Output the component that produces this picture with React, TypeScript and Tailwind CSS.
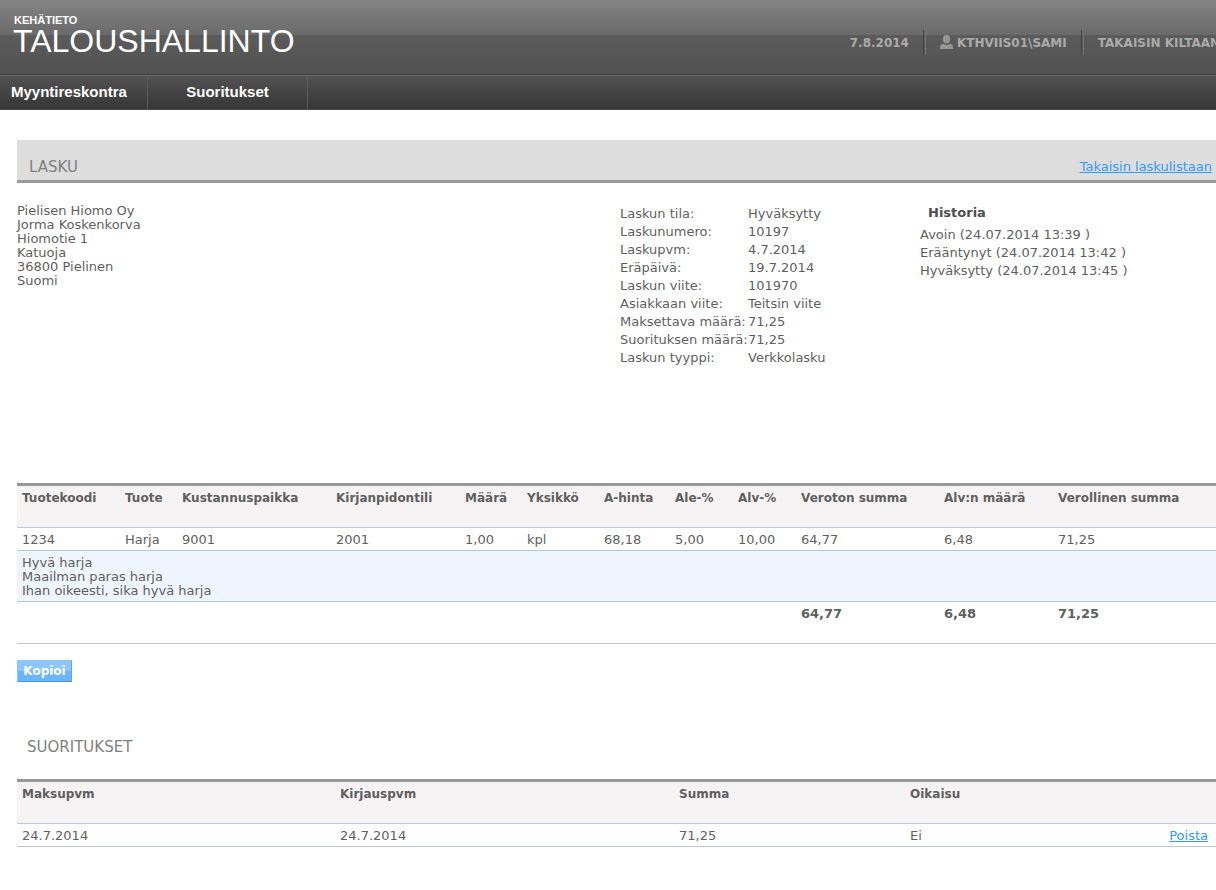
const invoiceInfo = [
  ["Laskun tila:", "Hyväksytty"],
  ["Laskunumero:", "10197"],
  ["Laskupvm:", "4.7.2014"],
  ["Eräpäivä:", "19.7.2014"],
  ["Laskun viite:", "101970"],
  ["Asiakkaan viite:", "Teitsin viite"],
  ["Maksettava määrä:", "71,25"],
  ["Suorituksen määrä:", "71,25"],
  ["Laskun tyyppi:", "Verkkolasku"],
];

const history = [
  "Avoin (24.07.2014 13:39 )",
  "Erääntynyt (24.07.2014 13:42 )",
  "Hyväksytty (24.07.2014 13:45 )",
];

const productColumns = [
  { title: "Tuotekoodi", value: "1234", width: "w-[103px]" },
  { title: "Tuote", value: "Harja", width: "w-[57px]" },
  { title: "Kustannuspaikka", value: "9001", width: "w-[154px]" },
  { title: "Kirjanpidontili", value: "2001", width: "w-[129px]" },
  { title: "Määrä", value: "1,00", width: "w-[62px]" },
  { title: "Yksikkö", value: "kpl", width: "w-[77px]" },
  { title: "A-hinta", value: "68,18", width: "w-[71px]" },
  { title: "Ale-%", value: "5,00", width: "w-[63px]" },
  { title: "Alv-%", value: "10,00", width: "w-[63px]" },
  { title: "Veroton summa", value: "64,77", width: "w-[143px]" },
  { title: "Alv:n määrä", value: "6,48", width: "w-[114px]" },
  { title: "Verollinen summa", value: "71,25", width: "" },
];

const UserIcon = () => (
  <svg viewBox="0 0 13 14" className="w-[13px] h-[14px] mb-0.5" fill="#979797" aria-hidden="true">
    <ellipse cx="6.5" cy="4.2" rx="3.6" ry="4.2" />
    <path d="M0 14v-1.800c0-1.800 1-2.800 3-3.400 1 .8 2.200 1.100 3.500 1.100s2.500-.3 3.500-1.100c2 .6 3 1.600 3 3.400V14z" />
  </svg>
);

const Divider = () => (
  <span className="h-[25px] w-[3px] self-start border-l border-r border-l-[#444444] border-r-[#747474]" />
);

const Header = () => (
  <header className="text-white">
    <div className="flex h-[75px] justify-between border-b border-[#3f3f3f] bg-[linear-gradient(#848484,#6a6a6a_35px,#5b5b5b_35px,#525252)]">
      <div className="pl-[13px] pt-3.5 font-['Liberation_Sans',Arial,sans-serif]">
        <p className="pl-px text-[11px] leading-[12px] font-bold">KEHÄTIETO</p>
        <h1 className="text-[32px] leading-[30px]">TALOUSHALLINTO</h1>
      </div>
      <div className="-mr-1 mt-[30px] flex h-[26px] items-center gap-3.5 whitespace-nowrap text-xs font-bold text-[#ababab]">
        <span>7.8.2014</span>
        <Divider />
        <span className="flex items-center gap-1">
          <UserIcon />
          KTHVIIS01\SAMI
        </span>
        <Divider />
        <a href="#kilta">TAKAISIN KILTAAN</a>
      </div>
    </div>
    <nav className="flex h-[35px] border-t border-b border-t-[#6a6a6a] border-b-[#4a4a4a] bg-[linear-gradient(#525252,#363636)] font-['Liberation_Sans',Arial,sans-serif] text-[15px] font-bold">
      <a href="#myyntireskontra" className="flex w-[148px] items-center border-r border-[#5a5a5a] pl-[11px]">
        Myyntireskontra
      </a>
      <a href="#suoritukset" className="flex w-[160px] items-center justify-center border-r border-[#5a5a5a]">
        Suoritukset
      </a>
    </nav>
  </header>
);

const ProductTable = () => (
  <table className="w-full table-fixed border-t-3 border-[#999999] text-left leading-[14px]">
    <thead className="bg-[#f5f3f4] text-xs leading-[14px]">
      <tr className="h-[43px] border-b border-[#bcc7d5] align-top">
        {productColumns.map((col) => (
          <th key={col.title} className={`pl-[5px] pt-[5px] whitespace-nowrap ${col.width}`}>
            {col.title}
          </th>
        ))}
      </tr>
    </thead>
    <tbody>
      <tr className="h-[23px] border-b border-[#bcc7d5]">
        {productColumns.map((col) => (
          <td key={col.title} className="pl-[5px] pt-0.5">{col.value}</td>
        ))}
      </tr>
      <tr className="border-b border-[#bcc7d5] bg-[#eef5ff]">
        <td colSpan={12} className="pt-[5px] pb-[3px] pl-[5px]">
          <p>Hyvä harja</p>
          <p>Maailman paras harja</p>
          <p>Ihan oikeesti, sika hyvä harja</p>
        </td>
      </tr>
      <tr className="h-[42px] border-b border-[#bcc7d5] align-top font-bold">
        <td colSpan={9}></td>
        <td className="pl-[5px] pt-[5px]">64,77</td>
        <td className="pl-[5px] pt-[5px]">6,48</td>
        <td className="pl-[5px] pt-[5px]">71,25</td>
      </tr>
    </tbody>
  </table>
);

const PaymentTable = () => (
  <table className="w-full table-fixed border-t-3 border-[#999999] text-left leading-[14px]">
    <thead className="bg-[#f5f3f4] text-xs leading-[14px]">
      <tr className="h-[43px] border-b border-[#bcc7d5] align-top">
        <th className="w-[318px] pl-[5px] pt-[5px]">Maksupvm</th>
        <th className="w-[339px] pl-[5px] pt-[5px]">Kirjauspvm</th>
        <th className="w-[231px] pl-[5px] pt-[5px]">Summa</th>
        <th className="pl-[5px] pt-[5px]">Oikaisu</th>
        <td></td>
      </tr>
    </thead>
    <tbody>
      <tr className="h-[23px] border-b border-[#bcc7d5]">
        <td className="pl-[5px] pt-0.5">24.7.2014</td>
        <td className="pl-[5px] pt-0.5">24.7.2014</td>
        <td className="pl-[5px] pt-0.5">71,25</td>
        <td className="pl-[5px] pt-0.5">Ei</td>
        <td className="pr-2 pt-0.5 text-right">
          <a href="#poista" className="text-[#3399ff] underline">Poista</a>
        </td>
      </tr>
    </tbody>
  </table>
);

const App = () => {
  return (
    <div className="overflow-x-hidden bg-white pb-10 font-['DejaVu_Sans',Verdana,sans-serif] text-[13px] text-[#5f5f5f]">
      <Header />
      <main className="pl-[17px] pt-[30px]">
        <div className="flex h-[43px] items-end justify-between border-b-3 border-[#999999] bg-[#dddddd] pb-1 pl-3 pr-1">
          <h2 className="text-[15px] leading-[18px] text-[#808080]">LASKU</h2>
          <a href="#laskulista" className="leading-[18px] text-[#3399ff] underline">Takaisin laskulistaan</a>
        </div>

        <section className="flex min-h-[300px] pt-[21px]">
          <address className="w-[603px] leading-[14px] not-italic">
            Pielisen Hiomo Oy<br />
            Jorma Koskenkorva<br />
            Hiomotie 1<br />
            Katuoja<br />
            36800 Pielinen<br />
            Suomi
          </address>
          <dl className="grid w-[300px] grid-cols-[128px_1fr] content-start pt-px leading-[18px] whitespace-nowrap">
            {invoiceInfo.map(([label, value]) => (
              <div key={label} className="contents">
                <dt>{label}</dt>
                <dd>{value}</dd>
              </div>
            ))}
          </dl>
          <div className="leading-[18px] whitespace-nowrap">
            <h3 className="mb-1 pl-2 leading-[18px] font-bold text-[#4f4f4f]">Historia</h3>
            {history.map((item) => (
              <p key={item}>{item}</p>
            ))}
          </div>
        </section>

        <ProductTable />
        <button
          type="button"
          className="mt-4 h-[22px] w-[55px] border border-t-[#8ec5fb] border-l-[#8ec5fb] border-r-[#5ba5ea] border-b-[#4a94dc] bg-[linear-gradient(#8cc6ff_50%,#6bb5ff_50%)] text-xs leading-[20px] font-bold text-white"
        >
          Kopioi
        </button>

        <h2 className="mt-14 mb-[23px] pl-2.5 text-[15px] leading-[18px] text-[#808080]">SUORITUKSET</h2>
        <PaymentTable />
      </main>
    </div>
  );
};

export default App
